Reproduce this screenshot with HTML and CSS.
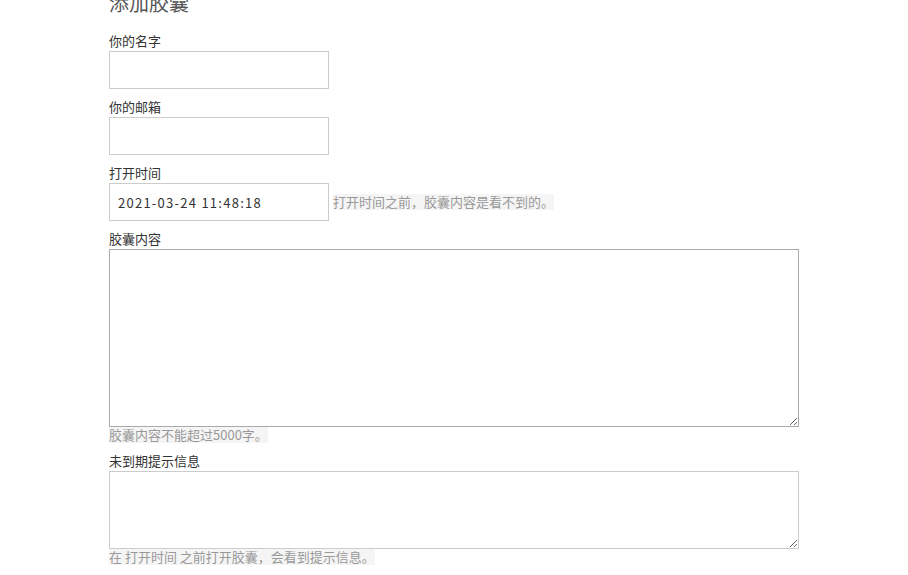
FILE: index.html
```html
<!DOCTYPE html>
<html lang="zh-CN">
<head>
    <meta charset="UTF-8">
    <title>添加胶囊</title>
    <link rel="stylesheet" href="styles.css">
</head>
<body>
    <div class="container">
        <h3 class="title">添加胶囊</h3>

        <div class="field">
            <label for="name">你的名字</label>
            <input type="text" id="name" class="text-input">
        </div>

        <div class="field">
            <label for="email">你的邮箱</label>
            <input type="text" id="email" class="text-input">
        </div>

        <div class="field">
            <label for="openTime">打开时间</label>
            <div class="inline-row">
                <input type="text" id="openTime" class="text-input date-input" value="2021-03-24 11:48:18">
                <span class="hint">打开时间之前，胶囊内容是看不到的。</span>
            </div>
        </div>

        <div class="field">
            <label for="content">胶囊内容</label>
            <textarea id="content" class="area area-large"></textarea>
            <span class="help">胶囊内容不能超过5000字。</span>
        </div>

        <div class="field">
            <label for="tips">未到期提示信息</label>
            <textarea id="tips" class="area area-small"></textarea>
            <span class="help">在 打开时间 之前打开胶囊，会看到提示信息。</span>
        </div>
    </div>
</body>
</html>
```

FILE: styles.css
```css
body {
    margin: 0;
    background-color: #ffffff;
    font-family: "Noto Sans CJK SC", "Noto Sans", sans-serif;
    font-size: 13px;
    color: #333333;
}
.container {
    width: 690px;
    margin-left: 109px;
}
.title {
    margin: -9px 0 16px;
    font-size: 20px;
    line-height: 24px;
    font-weight: normal;
    color: #555555;
}
.field {
    margin-bottom: 8px;
}
.field label {
    display: block;
    line-height: 20px;
}
.text-input {
    display: block;
    width: 220px;
    height: 38px;
    box-sizing: border-box;
    margin: 0;
    padding: 0 8px;
    border: 1px solid #cccccc;
    font-family: inherit;
    font-size: 13px;
    color: #333333;
    outline: none;
}
.date-input {
    letter-spacing: 1.25px;
}
.inline-row {
    display: flex;
    align-items: center;
}
.hint {
    margin-left: 4px;
    line-height: 16px;
    background-color: #f5f5f5;
    color: #999999;
}
.area {
    display: block;
    width: 690px;
    box-sizing: border-box;
    margin: 0;
    border: 1px solid #aaaaaa;
    font-family: inherit;
    font-size: 13px;
    outline: none;
}
.area-large {
    height: 178px;
}
.area-small {
    height: 78px;
    border-color: #cccccc;
}
.help {
    display: block;
    width: fit-content;
    line-height: 16px;
    background-color: #f5f5f5;
    color: #999999;
}
```
